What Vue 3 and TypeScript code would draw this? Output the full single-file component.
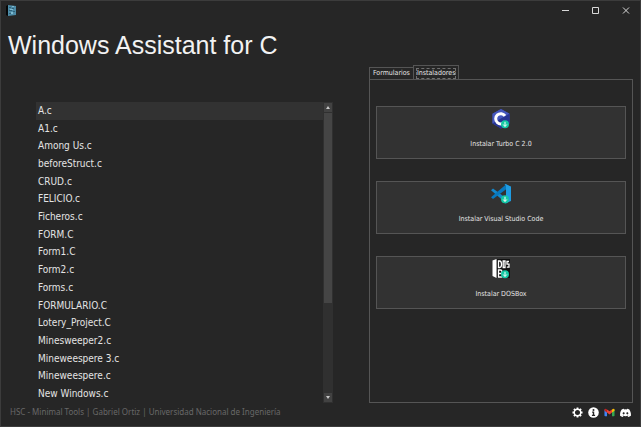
<script setup lang="ts">
import { ref } from 'vue'

type Tab = 'Formularios' | 'Instaladores'

const tabs: Tab[] = ['Formularios', 'Instaladores']
const activeTab = ref<Tab>('Instaladores')
const selected = ref('A.c')

const files: string[] = [
  'A.c', 'A1.c', 'Among Us.c', 'beforeStruct.c', 'CRUD.c', 'FELICIO.c',
  'Ficheros.c', 'FORM.C', 'Form1.C', 'Form2.c', 'Forms.c', 'FORMULARIO.C',
  'Lotery_Project.C', 'Minesweeper2.c', 'Mineweespere 3.c', 'Mineweespere.c',
  'New Windows.c',
]

const installers = [
  { id: 'turbo', label: 'Instalar Turbo C 2.0' },
  { id: 'code', label: 'Instalar Visual Studio Code' },
  { id: 'dosbox', label: 'Instalar DOSBox' },
]
</script>

<template>
  <div class="window">
    <header class="titlebar">
      <svg class="app-icon" viewBox="0 0 11 11" aria-hidden="true">
        <path d="M0 1l2-1v11l-2-1z" fill="#050708" />
        <path d="M2 0l8 1v9l-8 1z" fill="#4d8ba6" />
        <path d="M3 2h2v1h-2zM6 3h2v1h-2zM3 5h3v1h-3zM7 6h2v1h-2zM3 8h2v1h-2z" fill="#2f6078" />
        <path d="M6 1h2v1h-2zM4 4h3v1h-3zM5 7h2v2h-2z" fill="#7fbbd2" />
      </svg>
      <div class="controls">
        <button type="button" aria-label="Minimizar">
          <svg viewBox="0 0 8 8"><path d="M0 4.5h7" /></svg>
        </button>
        <button type="button" aria-label="Maximizar">
          <svg viewBox="0 0 8 8"><path d="M.5 1.500h6v6h-6z" /></svg>
        </button>
        <button type="button" aria-label="Cerrar">
          <svg viewBox="0 0 8 8"><path d="M1 1.500l6 6M7 1.500l-6 6" /></svg>
        </button>
      </div>
    </header>

    <h1>Windows Assistant for C</h1>

    <main>
      <section class="browser" aria-label="Archivos">
        <ul role="listbox" aria-label="Archivos">
          <li
            v-for="file in files"
            :key="file"
            role="option"
            :aria-selected="file === selected"
            :class="{ selected: file === selected }"
            @click="selected = file"
          >{{ file }}</li>
        </ul>
        <div class="scrollbar">
          <button type="button" aria-label="Subir">
            <svg viewBox="0 0 4 3"><path d="M2 0l2 3h-4z" /></svg>
          </button>
          <div class="track"><div class="thumb"></div></div>
          <button type="button" aria-label="Bajar">
            <svg viewBox="0 0 4 3"><path d="M0 0h4l-2 3z" /></svg>
          </button>
        </div>
      </section>

      <section class="tools">
        <div class="tabs" role="tablist">
          <button
            v-for="tab in tabs"
            :key="tab"
            type="button"
            role="tab"
            :aria-selected="tab === activeTab"
            :class="{ active: tab === activeTab }"
            @click="activeTab = tab"
          ><span>{{ tab }}</span></button>
        </div>
        <div class="panel" role="tabpanel">
          <button v-for="item in installers" :key="item.id" type="button" class="install">
            <svg viewBox="0 0 20 20" aria-hidden="true">
              <g v-if="item.id === 'turbo'">
                <path d="M10 0l8.500 4.800v9.800l-8.500 4.900-8.500-4.900v-9.800z" fill="#3949ab" />
                <path d="M10 0l8.500 4.800-17 9.800v-9.800z" fill="#4557bd" />
                <path d="M18.500 4.800v9.800l-8.500 4.900-8.500-4.900 8.500-5z" fill="#283593" />
                <path d="M14 6.900a5.100 5.100 0 1 0 0 5.800" fill="none" stroke="#fff" stroke-width="3" />
              </g>
              <g v-else-if="item.id === 'code'">
                <path d="M0 6.200l2-1.700 13.500 10v5z" fill="#1488cc" />
                <path d="M0 13.300l2 1.700 13.500-10v-5z" fill="#0878be" />
                <path d="M14.500 0l5.500 2.500v14.500l-5.500 2.500-1-.5 1.500-1v-16.500l-1.500-1z" fill="#1f9ce2" />
              </g>
              <g v-else>
                <path d="M1.500 1.500l4-1.500v19l-4-2z" fill="#fff" />
                <path d="M6 0h13v19h-13z" fill="#111" />
                <path d="M7.500 2v6.500h1.200q1.800 0 1.800-3.200t-1.800-3.300zM12.200 2h1.800v6.500h-1.800zM18 2.500h-2v2.700h2v3h-2.200M7.500 11h2q1.500 0 1.500 1.800t-1.500 1.700h-2zM7.500 14.500h2.500q1.500 0 1.500 2t-1.500 1.500h-2.500z" fill="none" stroke="#fff" stroke-width="1.300" />
              </g>
              <circle cx="14" cy="15.300" r="4" fill="#13c9a4" />
              <path d="M14 12.800v4.500M12.200 15.500l1.800 2 1.800-2" fill="none" stroke="#fff" stroke-width="1" />
            </svg>
            <span>{{ item.label }}</span>
          </button>
        </div>
      </section>
    </main>

    <footer>
      <p>HSC - Minimal Tools | Gabriel Ortiz | Universidad Nacional de Ingeniería</p>
      <nav>
        <a href="#settings" aria-label="Configuración">
          <svg viewBox="0 0 24 24">
            <circle cx="12" cy="12" r="7" fill="none" stroke="#fff" stroke-width="3" />
            <path d="M12 1v4M12 19v4M1 12h4M19 12h4M4.200 4.200l3 3M16.800 16.800l3 3M4.200 19.800l3-3M16.800 7.200l3-3" stroke="#fff" stroke-width="4" />
          </svg>
        </a>
        <a href="#info" aria-label="Información">
          <svg viewBox="0 0 24 24">
            <circle cx="12" cy="12" r="11.500" fill="#fff" />
            <circle cx="12" cy="6.500" r="2.200" fill="#262626" />
            <path d="M9 10h4.500v7h2v2.500h-7v-2.500h2v-4.500h-1.500z" fill="#262626" />
          </svg>
        </a>
        <a href="#gmail" aria-label="Gmail">
          <svg viewBox="0 0 24 24">
            <path d="M1 5.500v13q0 1.500 1.500 1.500h4v-10.500z" fill="#4285f4" />
            <path d="M23 5.500v13q0 1.500-1.500 1.500h-4v-10.500z" fill="#34a853" />
            <path d="M17.500 5.500l2-1.300q3.500-1.200 3.500 2.300v1.500l-5.500 4z" fill="#fbbc04" />
            <path d="M6.500 5.500l5.500 4 5.500-4v6.500l-5.500 4.200-5.500-4.200z" fill="#ea4335" />
            <path d="M1 8v-1.500q0-3.500 3.500-2.300l2 1.300v6.500z" fill="#c5221f" />
          </svg>
        </a>
        <a href="#discord" aria-label="Discord">
          <svg viewBox="0 0 24 24">
            <path d="M20.300 5.400a19.800 19.800 0 0 0-4.900-1.500l-.7 1.300a18 18 0 0 0-5.400 0l-.7-1.300a19.700 19.700 0 0 0-4.900 1.500c-3.100 4.600-4 9.100-3.500 13.600a20 20 0 0 0 6 3l1.300-2.100-1.900-.9.500-.4a14.200 14.200 0 0 0 11.900 0l.4.400-1.900.9 1.300 2.100a19.900 19.900 0 0 0 6-3c.6-5.200-.9-9.700-3.500-13.600zM8 16.300c-1.200 0-2.200-1.100-2.200-2.400s1-2.400 2.200-2.400 2.200 1.100 2.200 2.400-1 2.400-2.200 2.400zm8 0c-1.200 0-2.200-1.100-2.200-2.400s1-2.400 2.200-2.400 2.200 1.100 2.200 2.400-1 2.400-2.200 2.400z" fill="#fff" />
          </svg>
        </a>
      </nav>
    </footer>
  </div>
</template>

<style>
body {
  background: #262626;
}
</style>

<style scoped>
.window {
  box-sizing: border-box;
  min-height: 100vh;
  display: flex;
  flex-direction: column;
  border: 1px solid #3c3c3c;
  background: #262626;
  color: #e4e4e4;
  font-family: Tahoma, "DejaVu Sans Condensed", "Noto Sans", sans-serif;
}
button {
  margin: 0;
  padding: 0;
  border: 0;
  background: none;
  color: inherit;
  font: inherit;
}
svg {
  display: block;
}
.titlebar {
  display: flex;
  justify-content: space-between;
  height: 28px;
  padding-left: 5px;
}
.app-icon {
  width: 11px;
  height: 11px;
  margin-top: 4px;
}
.controls {
  display: flex;
  gap: 2px;
}
.controls button {
  display: flex;
  justify-content: center;
  align-items: center;
  width: 28px;
  height: 18px;
}
.controls svg {
  width: 8px;
  height: 8px;
  fill: none;
  stroke: #d8d8d8;
  stroke-width: 1;
}
h1 {
  margin: 0;
  padding-left: 7px;
  font: 400 25px/32px "Liberation Sans", Arial, sans-serif;
  color: #f2f2f2;
}
main {
  flex: 1;
  display: grid;
  grid-template-columns: 9fr 8fr;
  gap: 36px;
  padding: 4px 7px 0 35px;
}
.browser {
  display: flex;
  margin-top: 37px;
}
ul {
  flex: 1;
  display: grid;
  grid-auto-rows: 1fr;
  margin: 0;
  padding: 0;
  list-style: none;
  font-size: 10px;
  line-height: 16px;
}
li {
  display: flex;
  align-items: center;
  padding-left: 2px;
}
.selected {
  background: #323232;
}
.scrollbar {
  display: flex;
  flex-direction: column;
  gap: 1px;
  width: 8px;
  padding: 1px;
  background: #303030;
}
.scrollbar button {
  display: flex;
  justify-content: center;
  align-items: center;
  height: 9px;
  background: #424242;
}
.scrollbar svg {
  width: 4px;
  height: 3px;
  fill: #c8c8c8;
}
.track {
  flex: 1;
}
.thumb {
  height: 68%;
  background: #454545;
}
.tools {
  display: flex;
  flex-direction: column;
}
.tabs {
  display: flex;
  align-items: flex-end;
  font-size: 7px;
  line-height: 9px;
}
.tabs button {
  height: 12px;
  padding: 0 3px;
  border: 1px solid #555;
  border-width: 1px 0 0 1px;
}
.tabs .active {
  height: 15px;
  margin-bottom: -1px;
  border-width: 1px 1px 0;
  background: #262626;
}
.tabs span {
  display: block;
}
.active span {
  outline: 1px dashed #707070;
}
.panel {
  flex: 1;
  display: flex;
  flex-direction: column;
  gap: 22px;
  padding: 26px 6px;
  border: 1px solid #555;
}
.install {
  display: flex;
  flex-direction: column;
  align-items: center;
  gap: 10px;
  height: 53px;
  padding-top: 2px;
  border: 1px solid #555;
  background: #323232;
  font-size: 7px;
  line-height: 10px;
}
.install svg {
  width: 20px;
  height: 20px;
}
footer {
  display: flex;
  justify-content: space-between;
  align-items: center;
  height: 18px;
  padding: 0 9px 5px;
}
footer p {
  margin: 0;
  font-family: Tahoma, "Noto Sans", sans-serif;
  font-size: 8px;
  line-height: 12px;
  color: #686868;
}
nav {
  display: flex;
  gap: 5px;
}
nav svg {
  width: 11px;
  height: 11px;
}
</style>
